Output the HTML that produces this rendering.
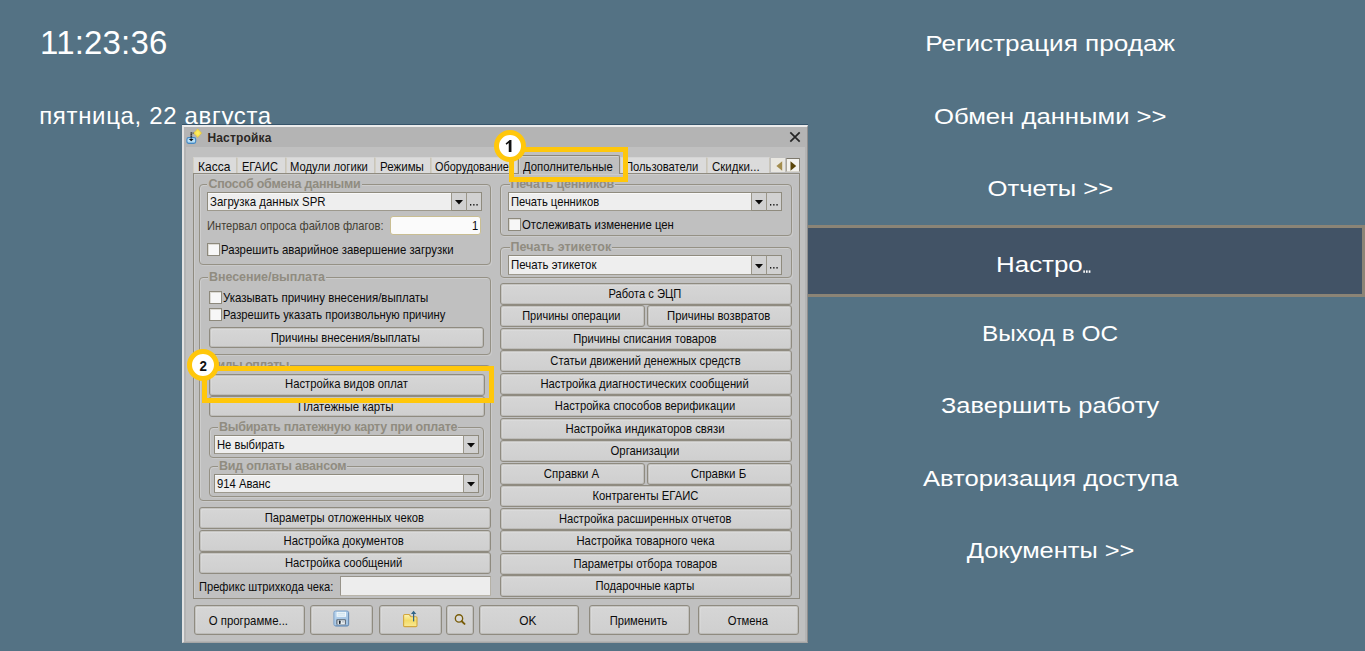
<!DOCTYPE html>
<html lang="ru"><head><meta charset="utf-8"><title>Настройка</title>
<style>
*{box-sizing:border-box;margin:0;padding:0}
html,body{width:1365px;height:651px;overflow:hidden;background:#547284;font-family:"Liberation Sans",sans-serif}
.a{position:absolute;white-space:nowrap}
.t{font-size:12.2px;color:#0b0b0b;line-height:14px}
.clock{left:40.1px;top:24.4px;font-size:33px;line-height:37px;color:#fff;letter-spacing:.17px}
.date{left:39.2px;top:102.2px;font-size:24px;line-height:28px;color:#fff;letter-spacing:.66px}
.mi{left:736px;width:629px;text-align:center;font-size:22.6px;color:#fff;line-height:26px}
.hl{left:736px;top:225px;width:629px;height:72px;background:#425366;border:3px solid #8b8476}
.dlg{left:182px;top:125px;width:626px;height:518px;background:#b4b4b4;border-top:2px solid #ececec;border-left:2px solid #e2e2e2;border-right:1px solid #8e8e8e;border-bottom:1px solid #a6a6a6;box-shadow:0 -1px 0 rgba(30,60,85,.55)}
.client{left:186px;top:147px;width:619px;height:494px;background:#c0c0c0}
.title{left:207.4px;top:130.6px;font-size:12px;font-weight:bold;letter-spacing:.17px;color:#2b2724;line-height:14px}
.tab{top:157px;height:16px;background:#dbdbdb;border-left:1px solid #d3cfc3;border-right:1px solid #c9c5ba;border-top:1px solid #d4d4d4;padding-left:5px;line-height:14px}
.tab span{position:relative;top:2.4px}
.tabsel{top:155px;height:19px;background:#c0c0c0;border:1px solid #8b867b;border-bottom:none;border-radius:2px 2px 0 0;padding-left:5px;line-height:14px;box-shadow:inset 1px 1px 0 #d0d0d0}
.tabsel span{position:relative;top:4px;left:-1px}
.panel{left:193px;top:173px;width:607px;height:426px;border:1px solid #8f8b80;background:#c0c0c0;box-shadow:inset 1px 1px 0 #cbcbcb}
.grp{border:1px solid #959185;border-radius:4px;box-shadow:inset 1px 1px 0 #cdcdcd,1px 1px 0 #cacaca}
.gl{font-size:12.5px;font-weight:bold;color:#908c80;background:#c0c0c0;line-height:12px;height:12px;padding:0 1px}
.btn{background:linear-gradient(#d6d6d6,#cfcfcf);border:1px solid #8f8b80;border-radius:3px;text-align:center;box-shadow:inset 0 0 0 1px rgba(143,139,128,.28),inset 2px 2px 0 rgba(255,255,255,.12);line-height:14px}
.cb{width:13px;height:13px;background:#f7f7f7;border:1px solid #8d897c;box-shadow:inset 1px 1px 0 #dcdad4}
.combo{background:#eeeeee;border:1px solid #8f8b7e;border-bottom-color:#9d998d;box-shadow:inset 0 1px 0 #f8f8f8}
.cbtn{background:#d1d1d1;border:1px solid #8f8b7e;border-left-color:#9a968a}
.inp{background:#fbfbfb;border:1px solid #c9be93;border-radius:3px}
.inp2{background:#ededed;border:1px solid #97938a;border-bottom-color:#b9b5aa;border-right-color:#b5b1a6}
.ybox{border:5px solid #ffc70b}
.ycirc{width:32px;height:32px;border-radius:50%;background:#fff;border:5px solid #ffc70b;text-align:center;font-weight:bold;font-size:14.8px;line-height:22px;color:#111}
</style></head>
<body>
<div class="a clock">11:23:36</div>
<div class="a date">пятница, 22 августа</div>
<div class="a hl"></div>
<div class="a mi" style="top:31.37px"><span style="display:inline-block;transform:scaleX(1.1560);transform-origin:50% 50%">Регистрация продаж</span></div>
<div class="a mi" style="top:103.77px"><span style="display:inline-block;transform:scaleX(1.1366);transform-origin:50% 50%">Обмен данными &gt;&gt;</span></div>
<div class="a mi" style="top:176.17px"><span style="display:inline-block;transform:scaleX(1.1357);transform-origin:50% 50%">Отчеты &gt;&gt;</span></div>
<div class="a mi" style="top:251.57px;left:996px;width:auto;text-align:left"><span style="display:inline-block;position:relative;transform:scaleX(1.1471);transform-origin:0 50%">Настро<svg style="position:absolute;left:100%;bottom:4.4px;margin-left:.6px" width="7" height="3" viewBox="0 0 7 3"><rect x="0" y=".4" width="1.5" height="2.4" fill="#fff"/><rect x="2.4" y=".4" width="1.5" height="2.4" fill="#fff"/><rect x="4.8" y=".4" width="1.5" height="2.4" fill="#fff"/></svg></span></div>
<div class="a mi" style="top:320.97px"><span style="display:inline-block;transform:scaleX(1.0804);transform-origin:50% 50%">Выход в ОС</span></div>
<div class="a mi" style="top:393.37px"><span style="display:inline-block;transform:scaleX(1.1231);transform-origin:50% 50%">Завершить работу</span></div>
<div class="a mi" style="top:465.77px"><span style="display:inline-block;transform:scaleX(1.1342);transform-origin:50% 50%">Авторизация доступа</span></div>
<div class="a mi" style="top:538.17px"><span style="display:inline-block;transform:scaleX(1.1251);transform-origin:50% 50%">Документы &gt;&gt;</span></div>
<div class="a dlg"></div><div class="a client"></div>
<svg class="a" style="left:186px;top:128px" width="17" height="17" viewBox="0 0 17 17">
<defs><linearGradient id="tb" x1="0" y1="0" x2="0" y2="1"><stop offset="0" stop-color="#8fc4ea"/><stop offset=".55" stop-color="#c4e6fa"/><stop offset="1" stop-color="#8cc2e6"/></linearGradient>
<radialGradient id="td" cx=".5" cy=".5" r=".6"><stop offset="0" stop-color="#fff06a"/><stop offset="1" stop-color="#f3d52c"/></radialGradient></defs>
<rect x=".9" y="9.5" width="8.8" height="5.9" rx="1.9" fill="url(#tb)" stroke="#4388c4" stroke-width="1.1"/>
<path d="M5.3 4.6V11.2" stroke="#111" stroke-width="1.7" stroke-dasharray="1 .6"/>
<path d="M5.6 5.1H8.4" stroke="#333" stroke-width="1" stroke-dasharray=".9 .6"/>
<path d="M2.9 10.9H7.5L5.2 13.3Z" fill="#0a0a0a"/>
<path d="M11.7 .7L15.7 5.1L11.7 9.6L7.7 5.1Z" fill="url(#td)" stroke="#d9b848" stroke-width=".5"/>
</svg>

<div class="a title">Настройка</div>
<svg class="a" style="left:789px;top:131px" width="12" height="12" viewBox="0 0 12 12"><path d="M1.3 1.3L10.7 10.7M10.7 1.3L1.3 10.7" stroke="#262626" stroke-width="1.7" fill="none"/></svg>
<div class="a panel"></div>
<div class="a tab t" style="left:193px;width:44px;padding-left:4px"><span style="display:inline-block;transform:scaleX(0.9834);transform-origin:0 50%;">Касса</span></div>
<div class="a tab t" style="left:237px;width:49px;padding-left:4px"><span style="display:inline-block;transform:scaleX(0.9064);transform-origin:0 50%;">ЕГАИС</span></div>
<div class="a tab t" style="left:286px;width:89px;padding-left:3.4px"><span style="display:inline-block;transform:scaleX(0.9222);transform-origin:0 50%;">Модули логики</span></div>
<div class="a tab t" style="left:375px;width:56px;padding-left:4px"><span style="display:inline-block;transform:scaleX(0.9473);transform-origin:0 50%;">Режимы</span></div>
<div class="a tab t" style="left:431px;width:87px;padding-left:3.2px"><span style="display:inline-block;transform:scaleX(0.8915);transform-origin:0 50%;">Оборудование</span></div>
<div class="a tab t" style="left:620px;width:87px;padding-left:4px"><span style="display:inline-block;transform:scaleX(0.9215);transform-origin:0 50%;">Пользователи</span></div>
<div class="a tab t" style="left:707px;width:63px;padding-left:3.5px"><span style="display:inline-block;transform:scaleX(0.9452);transform-origin:0 50%;">Скидки...</span></div>
<div class="a tabsel t" style="left:518px;width:102px"><span style="display:inline-block;transform:scaleX(0.9297);transform-origin:0 50%;">Дополнительные</span></div>
<div class="a" style="left:771px;top:158px;width:14px;height:14px;background:#e9e7e1"></div>
<svg class="a" style="left:775.5px;top:160.5px" width="7" height="10" viewBox="0 0 7 10"><path d="M6.2 .2V9.8L.4 5Z" fill="#a38d4e"/></svg>
<div class="a" style="left:786px;top:158px;width:14px;height:14px;background:#f3f2ee;border-top:1px solid #7d786c;border-right:1px solid #8c877b;border-left:1px solid #aaa59a;border-bottom:1px solid #d8d5cc"></div>
<svg class="a" style="left:790.3px;top:160.5px" width="7" height="10" viewBox="0 0 7 10"><path d="M.5 .2V9.8L6.2 5Z" fill="#5a4509"/></svg>
<div class="a grp" style="left:199px;top:184px;width:292px;height:81px"></div>
<div class="a gl" style="left:207.4px;top:177.67px;letter-spacing:-0.220px;">Способ обмена данными</div>
<div class="a combo" style="left:207px;top:192px;width:245px;height:19px"></div>
<div class="a t" style="left:209.8px;top:194.77px;"><span style="display:inline-block;transform:scaleX(0.9365);transform-origin:0 50%;">Загрузка данных SPR</span></div>
<div class="a cbtn" style="left:451px;top:192px;width:16px;height:19px"><svg class="a" style="left:3px;top:7.1px" width="8" height="5" viewBox="0 0 8 5"><path d="M0 0H8L4 4.6Z" fill="#0a0a0a"/></svg></div>
<div class="a cbtn" style="left:466px;top:192px;width:16px;height:19px"><svg class="a" style="left:3.4px;top:10.9px" width="9" height="2" viewBox="0 0 9 2"><rect x="0" y="0" width="1.3" height="1.6" fill="#1a1a1a"/><rect x="3.2" y="0" width="1.3" height="1.6" fill="#1a1a1a"/><rect x="6.4" y="0" width="1.3" height="1.6" fill="#1a1a1a"/></svg></div>
<div class="a t" style="left:206.5px;top:219.27px;color:#433e33"><span style="display:inline-block;transform:scaleX(0.9133);transform-origin:0 50%;">Интервал опроса файлов флагов:</span></div>
<div class="a inp" style="left:390px;top:216px;width:91px;height:19px"></div>
<div class="a t" style="left:471.9px;top:219.27px;"><span style="display:inline-block;transform:scaleX(0.9180);transform-origin:0 50%;">1</span></div>
<div class="a cb" style="left:207px;top:243px"></div>
<div class="a t" style="left:220.8px;top:242.77px;"><span style="display:inline-block;transform:scaleX(0.9331);transform-origin:0 50%;">Разрешить аварийное завершение загрузки</span></div>
<div class="a grp" style="left:199px;top:277px;width:292px;height:78px"></div>
<div class="a gl" style="left:208px;top:270.67px;letter-spacing:-0.054px;">Внесение/выплата</div>
<div class="a cb" style="left:209px;top:291px"></div>
<div class="a t" style="left:223.4px;top:290.77px;"><span style="display:inline-block;transform:scaleX(0.9431);transform-origin:0 50%;">Указывать причину внесения/выплаты</span></div>
<div class="a cb" style="left:209px;top:308px"></div>
<div class="a t" style="left:223.2px;top:307.57px;"><span style="display:inline-block;transform:scaleX(0.9203);transform-origin:0 50%;">Разрешить указать произвольную причину</span></div>
<div class="a btn t" style="left:209px;top:327px;width:275px;height:21px"><span style="display:inline-block;transform:scaleX(0.9299);transform-origin:50% 50%;position:relative;left:-1px;top:2.77px">Причины внесения/выплаты</span></div>
<div class="a grp" style="left:199px;top:365px;width:292px;height:136px"></div>
<div class="a gl" style="left:208px;top:358.67px;letter-spacing:-0.517px;overflow:hidden;">Виды оплаты</div>
<div class="a btn t" style="left:209px;top:373.5px;width:276px;height:22.0px"><span style="display:inline-block;transform:scaleX(0.9241);transform-origin:50% 50%;position:relative;left:-1px;top:2.77px">Настройка видов оплат</span></div>
<div class="a btn t" style="left:209px;top:396px;width:276px;height:21.399999999999977px"><span style="display:inline-block;transform:scaleX(0.9388);transform-origin:50% 50%;position:relative;left:-1px;top:2.77px">Платежные карты</span></div>
<div class="a grp" style="left:209px;top:427px;width:275px;height:31px"></div>
<div class="a gl" style="left:218px;top:420.67px;letter-spacing:-0.246px;">Выбирать платежную карту при оплате</div>
<div class="a combo" style="left:214px;top:435px;width:250px;height:19px"></div>
<div class="a t" style="left:217.2px;top:437.77px;"><span style="display:inline-block;transform:scaleX(0.9219);transform-origin:0 50%;">Не выбирать</span></div>
<div class="a cbtn" style="left:463px;top:435px;width:16px;height:19px"><svg class="a" style="left:3px;top:7.1px" width="8" height="5" viewBox="0 0 8 5"><path d="M0 0H8L4 4.6Z" fill="#0a0a0a"/></svg></div>
<div class="a grp" style="left:209px;top:466px;width:275px;height:31px"></div>
<div class="a gl" style="left:218px;top:459.67px;letter-spacing:-0.219px;">Вид оплаты авансом</div>
<div class="a combo" style="left:214px;top:474px;width:250px;height:19px"></div>
<div class="a t" style="left:217px;top:476.77px;"><span style="display:inline-block;transform:scaleX(0.9257);transform-origin:0 50%;">914 Аванс</span></div>
<div class="a cbtn" style="left:463px;top:474px;width:16px;height:19px"><svg class="a" style="left:3px;top:7.1px" width="8" height="5" viewBox="0 0 8 5"><path d="M0 0H8L4 4.6Z" fill="#0a0a0a"/></svg></div>
<div class="a btn t" style="left:199px;top:507.2px;width:292px;height:22.000000000000057px"><span style="display:inline-block;transform:scaleX(0.9232);transform-origin:50% 50%;position:relative;left:-1px;top:3.07px">Параметры отложенных чеков</span></div>
<div class="a btn t" style="left:199px;top:529.7px;width:292px;height:22.0px"><span style="display:inline-block;transform:scaleX(0.9304);transform-origin:50% 50%;position:relative;left:-1px;top:3.07px">Настройка документов</span></div>
<div class="a btn t" style="left:199px;top:552.2px;width:292px;height:22.0px"><span style="display:inline-block;transform:scaleX(0.9224);transform-origin:50% 50%;position:relative;left:-1px;top:3.07px">Настройка сообщений</span></div>
<div class="a t" style="left:198.8px;top:579.77px;"><span style="display:inline-block;transform:scaleX(0.9118);transform-origin:0 50%;">Префикс штрихкода чека:</span></div>
<div class="a inp2" style="left:340px;top:576px;width:151px;height:20px"></div>
<div class="a grp" style="left:500px;top:184px;width:292px;height:52px"></div>
<div class="a gl" style="left:509.5px;top:177.67px;letter-spacing:-0.168px;">Печать ценников</div>
<div class="a combo" style="left:508px;top:192px;width:244px;height:19px"></div>
<div class="a t" style="left:510.8px;top:194.77px;"><span style="display:inline-block;transform:scaleX(0.9204);transform-origin:0 50%;">Печать ценников</span></div>
<div class="a cbtn" style="left:751px;top:192px;width:16px;height:19px"><svg class="a" style="left:3px;top:7.1px" width="8" height="5" viewBox="0 0 8 5"><path d="M0 0H8L4 4.6Z" fill="#0a0a0a"/></svg></div>
<div class="a cbtn" style="left:766px;top:192px;width:16px;height:19px"><svg class="a" style="left:3.4px;top:10.9px" width="9" height="2" viewBox="0 0 9 2"><rect x="0" y="0" width="1.3" height="1.6" fill="#1a1a1a"/><rect x="3.2" y="0" width="1.3" height="1.6" fill="#1a1a1a"/><rect x="6.4" y="0" width="1.3" height="1.6" fill="#1a1a1a"/></svg></div>
<div class="a cb" style="left:508px;top:217.5px"></div>
<div class="a t" style="left:521.5px;top:217.77px;"><span style="display:inline-block;transform:scaleX(0.9318);transform-origin:0 50%;">Отслеживать изменение цен</span></div>
<div class="a grp" style="left:500px;top:247px;width:292px;height:31px"></div>
<div class="a gl" style="left:509.6px;top:240.67px;letter-spacing:0.003px;">Печать этикеток</div>
<div class="a combo" style="left:508px;top:255px;width:244px;height:20px"></div>
<div class="a t" style="left:510.8px;top:257.77px;"><span style="display:inline-block;transform:scaleX(0.9389);transform-origin:0 50%;">Печать этикеток</span></div>
<div class="a cbtn" style="left:751px;top:255px;width:16px;height:20px"><svg class="a" style="left:3px;top:7.6px" width="8" height="5" viewBox="0 0 8 5"><path d="M0 0H8L4 4.6Z" fill="#0a0a0a"/></svg></div>
<div class="a cbtn" style="left:766px;top:255px;width:16px;height:20px"><svg class="a" style="left:3.4px;top:11.4px" width="9" height="2" viewBox="0 0 9 2"><rect x="0" y="0" width="1.3" height="1.6" fill="#1a1a1a"/><rect x="3.2" y="0" width="1.3" height="1.6" fill="#1a1a1a"/><rect x="6.4" y="0" width="1.3" height="1.6" fill="#1a1a1a"/></svg></div>
<div class="a btn t" style="left:500px;top:282.5px;width:292px;height:22.0px"><span style="display:inline-block;transform:scaleX(0.9130);transform-origin:50% 50%;position:relative;left:-1px;top:3.07px">Работа с ЭЦП</span></div>
<div class="a btn t" style="left:500px;top:305.0px;width:145px;height:22.0px"><span style="display:inline-block;transform:scaleX(0.9043);transform-origin:50% 50%;position:relative;left:-1px;top:3.07px">Причины операции</span></div>
<div class="a btn t" style="left:647px;top:305.0px;width:145px;height:22.0px"><span style="display:inline-block;transform:scaleX(0.9271);transform-origin:50% 50%;position:relative;left:-1px;top:3.07px">Причины возвратов</span></div>
<div class="a btn t" style="left:500px;top:327.5px;width:292px;height:22.0px"><span style="display:inline-block;transform:scaleX(0.9206);transform-origin:50% 50%;position:relative;left:-1px;top:3.07px">Причины списания товаров</span></div>
<div class="a btn t" style="left:500px;top:350.0px;width:292px;height:22.0px"><span style="display:inline-block;transform:scaleX(0.9195);transform-origin:50% 50%;position:relative;left:-1px;top:3.07px">Статьи движений денежных средств</span></div>
<div class="a btn t" style="left:500px;top:372.5px;width:292px;height:22.0px"><span style="display:inline-block;transform:scaleX(0.9251);transform-origin:50% 50%;position:relative;left:-1px;top:3.07px">Настройка диагностических сообщений</span></div>
<div class="a btn t" style="left:500px;top:395.0px;width:292px;height:22.0px"><span style="display:inline-block;transform:scaleX(0.9204);transform-origin:50% 50%;position:relative;left:-1px;top:3.07px">Настройка способов верификации</span></div>
<div class="a btn t" style="left:500px;top:417.5px;width:292px;height:22.0px"><span style="display:inline-block;transform:scaleX(0.9357);transform-origin:50% 50%;position:relative;left:-1px;top:3.07px">Настройка индикаторов связи</span></div>
<div class="a btn t" style="left:500px;top:440.0px;width:292px;height:22.0px"><span style="display:inline-block;transform:scaleX(0.9333);transform-origin:50% 50%;position:relative;left:-1px;top:3.07px">Организации</span></div>
<div class="a btn t" style="left:500px;top:462.5px;width:145px;height:22.0px"><span style="display:inline-block;transform:scaleX(0.9375);transform-origin:50% 50%;position:relative;left:-1px;top:3.07px">Справки А</span></div>
<div class="a btn t" style="left:647px;top:462.5px;width:145px;height:22.0px"><span style="display:inline-block;transform:scaleX(0.9429);transform-origin:50% 50%;position:relative;left:-1px;top:3.07px">Справки Б</span></div>
<div class="a btn t" style="left:500px;top:485.0px;width:292px;height:22.0px"><span style="display:inline-block;transform:scaleX(0.9236);transform-origin:50% 50%;position:relative;left:-1px;top:3.07px">Контрагенты ЕГАИС</span></div>
<div class="a btn t" style="left:500px;top:507.5px;width:292px;height:22.0px"><span style="display:inline-block;transform:scaleX(0.9151);transform-origin:50% 50%;position:relative;left:-1px;top:3.07px">Настройка расширенных отчетов</span></div>
<div class="a btn t" style="left:500px;top:530.0px;width:292px;height:22.0px"><span style="display:inline-block;transform:scaleX(0.9270);transform-origin:50% 50%;position:relative;left:-1px;top:3.07px">Настройка товарного чека</span></div>
<div class="a btn t" style="left:500px;top:552.5px;width:292px;height:22.0px"><span style="display:inline-block;transform:scaleX(0.9181);transform-origin:50% 50%;position:relative;left:-1px;top:3.07px">Параметры отбора товаров</span></div>
<div class="a btn t" style="left:500px;top:575.0px;width:292px;height:22.0px"><span style="display:inline-block;transform:scaleX(0.9184);transform-origin:50% 50%;position:relative;left:-1px;top:3.07px">Подарочные карты</span></div>
<div class="a btn t" style="left:194px;top:605px;width:111px;height:30px"><span style="display:inline-block;transform:scaleX(0.9360);transform-origin:50% 50%;position:relative;left:-1px;top:7.57px">О программе...</span></div>
<div class="a btn t" style="left:310px;top:605px;width:63px;height:30px"></div>
<div class="a btn t" style="left:379px;top:605px;width:63px;height:30px"></div>
<div class="a btn t" style="left:446px;top:605px;width:28px;height:30px"></div>
<div class="a btn t" style="left:479px;top:605px;width:100px;height:30px"><span style="display:inline-block;transform:scaleX(0.9768);transform-origin:50% 50%;position:relative;left:-1px;top:7.57px">OK</span></div>
<div class="a btn t" style="left:589px;top:605px;width:101px;height:30px"><span style="display:inline-block;transform:scaleX(0.9161);transform-origin:50% 50%;position:relative;left:-1px;top:7.57px">Применить</span></div>
<div class="a btn t" style="left:698px;top:605px;width:101px;height:30px"><span style="display:inline-block;transform:scaleX(0.9238);transform-origin:50% 50%;position:relative;left:-1px;top:7.57px">Отмена</span></div>
<svg class="a" style="left:333px;top:610px" width="17" height="17" viewBox="0 0 17 17">
<defs><linearGradient id="sv" x1="0" y1="0" x2="1" y2="1"><stop offset="0" stop-color="#b9d5ee"/><stop offset="1" stop-color="#9dbfe0"/></linearGradient></defs>
<rect x=".9" y="1" width="14.7" height="14.9" rx="1.6" fill="url(#sv)" stroke="#7b9fc6" stroke-width="1"/>
<path d="M15.6 2.5V14.6Q15.6 15.9 14.3 15.9H2.4" fill="none" stroke="#6a8db2" stroke-width="1"/>
<rect x="3.6" y="1.9" width="9.4" height="4.9" fill="#f3f8fc"/>
<path d="M4.6 3.3H12M4.6 5.1H12" stroke="#b6d6e6" stroke-width=".7"/>
<rect x="3.3" y="9.2" width="9.6" height="5.6" rx=".8" fill="#5d6772"/>
<rect x="4.5" y="10.3" width="7.4" height="4.2" fill="#e9eff3"/>
<rect x="5.9" y="10.5" width="1.7" height="3.4" rx=".7" fill="#1b2733"/>
<rect x="9" y="11" width="2.4" height="1.6" fill="#c2c9cf"/>
</svg>
<svg class="a" style="left:403px;top:610px" width="16" height="18" viewBox="0 0 16 18">
<defs><linearGradient id="fd" x1="0" y1="0" x2="0" y2="1"><stop offset="0" stop-color="#fdf4b4"/><stop offset=".5" stop-color="#f3db68"/><stop offset="1" stop-color="#f8e993"/></linearGradient></defs>
<path d="M.6 5.6Q.6 4.5 1.7 4.5H6.1L7.9 6.7H12.9Q14 6.7 14 7.8V15.5Q14 16.6 12.9 16.6H1.7Q.6 16.6 .6 15.5Z" fill="url(#fd)" stroke="#d2a63c" stroke-width="1.1"/>
<path d="M10.6 11.4V3.6" stroke="#2f6487" stroke-width="1.25"/><path d="M7.9 4.1L10.6 .7L13.3 4.1Z" fill="#2f6487"/>
</svg>
<svg class="a" style="left:454px;top:613px" width="12" height="12" viewBox="0 0 12 12">
<circle cx="5" cy="5.4" r="3.65" fill="#dadada" stroke="#785c08" stroke-width="1.35"/><path d="M7.7 8.2L10.5 10.9" stroke="#785c08" stroke-width="1.9" stroke-linecap="round"/>
</svg>

<div class="a ybox" style="left:509px;top:147px;width:119px;height:35px"></div>
<div class="a ycirc" style="left:494px;top:130px"></div>
<svg class="a" style="left:504px;top:138px" width="10" height="15" viewBox="0 0 10 15"><path d="M4.75 13.9V4.9L2.4 6.7L1.6 5.4L5.7 1.9H7.45V13.9Z" fill="#111"/></svg>
<div class="a ybox" style="left:202px;top:366px;width:292px;height:37px"></div>
<div class="a ycirc" style="left:187px;top:349px"><span style="display:inline-block;transform:scaleX(.9);position:relative;top:.6px">2</span></div>
</body></html>
